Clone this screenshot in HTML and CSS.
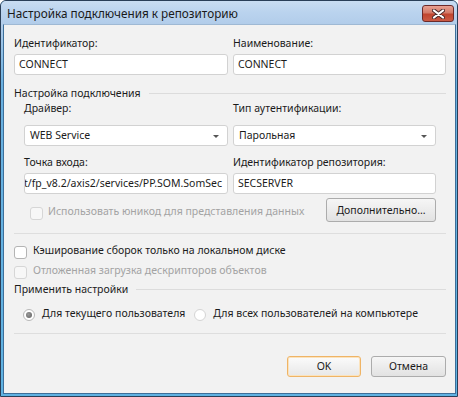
FILE: index.html
```html
<!DOCTYPE html>
<html lang="ru">
<head>
<meta charset="utf-8">
<link rel="stylesheet" href="styles.css">
</head>
<body>
<div class="window">
  <div class="titlebar">
    <span class="title">Настройка подключения к репозиторию</span>
    <div class="close">
      <svg width="13" height="10" viewBox="0 0 13 10">
        <path d="M2 1.5 L11 8.5 M11 1.5 L2 8.5" stroke="#4a2a2a" stroke-width="4" stroke-linecap="round" fill="none"/>
        <path d="M2 1.5 L11 8.5 M11 1.5 L2 8.5" stroke="#ffffff" stroke-width="2.2" stroke-linecap="round" fill="none"/>
      </svg>
    </div>
  </div>
  <div class="frame">
    <div class="client">
      <div class="cols top-cols">
        <div class="field">
          <div class="label">Идентификатор:</div>
          <div class="edit">CONNECT</div>
        </div>
        <div class="field">
          <div class="label">Наименование:</div>
          <div class="edit">CONNECT</div>
        </div>
      </div>

      <div class="group-header gh1"><span>Настройка подключения</span><div class="hline"></div></div>

      <div class="group">
        <div class="cols gcols">
          <div class="field">
            <div class="label">Драйвер:</div>
            <div class="edit combo"><span>WEB Service</span><span class="arrow"></span></div>
          </div>
          <div class="field">
            <div class="label">Тип аутентификации:</div>
            <div class="edit combo"><span>Парольная</span><span class="arrow"></span></div>
          </div>
        </div>
        <div class="cols gcols row2">
          <div class="field">
            <div class="label">Точка входа:</div>
            <div class="edit scrolled"><span>http://localhost/fp_v8.2/axis2/services/PP.SOM.SomSec</span></div>
          </div>
          <div class="field">
            <div class="label">Идентификатор репозитория:</div>
            <div class="edit">SECSERVER</div>
          </div>
        </div>
        <div class="opt-row">
          <label class="check disabled g-check"><span class="box"></span><span>Использовать юникод для представления данных</span></label>
          <div class="btn btn-more">Дополнительно...</div>
        </div>
      </div>

      <div class="sep sep1"></div>

      <label class="check c2"><span class="box"></span><span>Кэширование сборок только на локальном диске</span></label>
      <label class="check disabled c3"><span class="box"></span><span>Отложенная загрузка дескрипторов объектов</span></label>

      <div class="group-header gh2"><span>Применить настройки</span><div class="hline"></div></div>

      <div class="radios">
        <label class="radio r1"><span class="dot checked"></span><span>Для текущего пользователя</span></label>
        <label class="radio r2"><span class="dot"></span><span>Для всех пользователей на компьютере</span></label>
      </div>

      <div class="sep sep2"></div>

      <div class="footer">
        <div class="btn btn-ok">OK</div>
        <div class="btn btn-cancel">Отмена</div>
      </div>
    </div>
  </div>
</div>
</body>
</html>
```

FILE: styles.css
```css
* { box-sizing: border-box; }
html, body { margin: 0; padding: 0; background: #ffffff; }
body {
  font-family: "Noto Sans", "Open Sans", sans-serif;
  font-size: 10.5px;
  line-height: 15px;
  color: #1b1b1b;
}
.window {
  width: 458px;
  height: 397px;
  border: 1px solid #2a3f58;
  border-radius: 6px 6px 0 0;
  background: #62a9dc;
  display: flex;
  flex-direction: column;
  overflow: hidden;
}
.titlebar {
  height: 23px;
  flex: none;
  display: flex;
  align-items: flex-start;
  justify-content: space-between;
  background: linear-gradient(to bottom, #c9ddf2 0%, #bad3ee 50%, #b2cdea 100%);
  padding-left: 6px;
  padding-right: 3px;
}
.title {
  font-size: 11.75px;
  line-height: 16px;
  margin-top: 4px;
  color: #1a1a1a;
}
.close {
  margin-top: 4px;
  width: 32px;
  height: 17px;
  border: 1px solid #6b2a2a;
  border-radius: 3px;
  background: linear-gradient(to bottom, #e8a192 0%, #d37a68 45%, #c0452f 55%, #cb5a44 100%);
  display: flex;
  align-items: center;
  justify-content: center;
}
.frame {
  flex: 1;
  display: flex;
  padding: 0 1px 2px 2px;
  background: linear-gradient(to bottom, #b2cdea 0, #6ab0e0 60px, #5fb2e2 100%);
}
.client {
  flex: 1;
  background: #f2f2f2;
  border: 1px solid #3d6f9a;
  border-top-color: #9fb9d4;
  padding: 11px 9px 0 10px;
  display: flex;
  flex-direction: column;
}
.cols {
  display: grid;
  grid-template-columns: 214px 213px;
  column-gap: 5px;
}
.label { height: 15px; white-space: nowrap; }
.top-cols .label { margin-bottom: 3px; }
.edit {
  height: 21px;
  background: #ffffff;
  border: 1px solid #d2d2d2;
  border-radius: 3px;
  padding: 0 4px;
  display: flex;
  align-items: center;
  white-space: nowrap;
  overflow: hidden;
}
.combo { justify-content: space-between; padding-left: 5px; padding-right: 8px; }
.arrow {
  width: 0; height: 0;
  border-left: 3px solid transparent;
  border-right: 3px solid transparent;
  border-top: 3px solid #555555;
  margin-top: 1px;
}
.scrolled { justify-content: flex-end; padding-right: 5px; }
.scrolled span { flex: none; }

.group-header {
  display: flex;
  align-items: center;
  height: 15px;
  white-space: nowrap;
}
.group-header .hline {
  flex: 1;
  height: 1px;
  background: #dcdcdc;
  margin-left: 8px;
}
.gh1 { margin-top: 11px; }
.group { padding: 0 10px; }
.gcols { grid-template-columns: 204px 203px; }
.gcols .label { margin-bottom: 9px; }
.row2 { margin-top: 9px; }
.row2 .label { margin-bottom: 3px; }

.check, .radio {
  display: flex;
  align-items: center;
  height: 15px;
  white-space: nowrap;
}
.box {
  width: 13px;
  height: 13px;
  border: 1px solid #b4b4b4;
  border-radius: 3px;
  background: #ffffff;
  margin-right: 6px;
  flex: none;
}
.disabled { color: #a3a3a3; }
.disabled .box { border-color: #d6d6d6; background: #f7f7f7; }

.opt-row {
  margin-top: 4px;
  display: flex;
  justify-content: space-between;
  align-items: flex-start;
}
.g-check { margin-top: 6px; margin-left: 6px; }
.g-check .box { margin-top: 3px; margin-right: 5px; }

.btn {
  display: flex;
  align-items: center;
  justify-content: center;
  border: 1px solid #acacac;
  border-radius: 3px;
  background: linear-gradient(to bottom, #f6f6f6 0%, #ececec 50%, #e2e2e2 100%);
  color: #1b1b1b;
}
.btn-more { width: 110px; height: 24px; }

.sep { height: 1px; background: #dedede; }
.sep1 { margin-top: 11px; }
.c2 { margin-top: 9px; }
.c2 .box { margin-top: 3px; }
.c3 { margin-top: 5px; }
.c3 .box { margin-top: 3px; }
.gh2 { margin-top: 4px; }

.radios {
  margin-top: 9px;
  display: flex;
  padding-left: 9px;
}
.radio { margin-right: 9px; }
.dot {
  width: 12px;
  height: 12px;
  border-radius: 50%;
  border: 1px solid #b8b8b8;
  background: #ffffff;
  margin-right: 7px;
  margin-top: 3px;
  display: flex;
  align-items: center;
  justify-content: center;
  flex: none;
}
.r2 .dot { border-color: #d4d4d4; }
.dot.checked::after {
  content: "";
  width: 6px;
  height: 6px;
  border-radius: 50%;
  background: radial-gradient(circle at 40% 40%, #9a9a9a, #5e5e5e);
}
.sep2 { margin-top: 12px; }
.footer {
  margin-top: 22px;
  display: flex;
  justify-content: flex-end;
  gap: 10px;
}
.btn-ok {
  width: 74px;
  height: 21px;
  border-color: #efb466;
  background: linear-gradient(to bottom, #fbfbfb 0%, #f1f1f1 50%, #e8e8e8 100%);
  box-shadow: inset 0 0 0 1px #fbe3bd;
}
.btn-cancel { width: 75px; height: 21px; }
```
